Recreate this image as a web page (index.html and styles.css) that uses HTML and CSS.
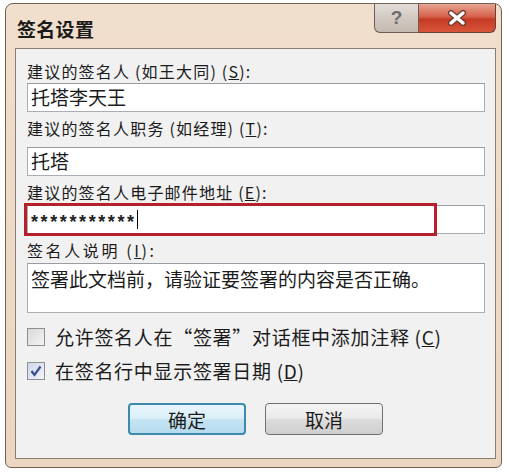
FILE: index.html
```html
<!DOCTYPE html>
<html lang="zh-CN">
<head>
<meta charset="UTF-8">
<meta name="viewport" content="width=device-width, initial-scale=1.0">
<title>签名设置</title>
<link rel="stylesheet" href="styles.css">
</head>
<body>

<div class="window">
    <div class="titlebar">
        <span class="title">签名设置</span>
        <div class="title-buttons">
            <span class="btn-help">?</span>
            <span class="btn-close">
                <svg width="22" height="16" viewBox="0 0 22 16">
                    <path d="M5 3 L17 13 M17 3 L5 13" stroke="#6e3a30" stroke-width="6" stroke-linecap="round"/>
                    <path d="M5 3 L17 13 M17 3 L5 13" stroke="#ffffff" stroke-width="3.5" stroke-linecap="round"/>
                </svg>
            </span>
        </div>
    </div>

    <div class="client">
        <div class="label label-first">建议的签名人 (如王大同) (<u>S</u>):</div>
        <div class="field field-first">托塔李天王</div>

        <div class="label label-next">建议的签名人职务 (如经理) (<u>T</u>):</div>
        <div class="field">托塔</div>

        <div class="label label-next">建议的签名人电子邮件地址 (<u>E</u>):</div>
        <div class="field-wrap">
            <div class="field field-mail"><span class="stars">***********</span><span class="caret"></span></div>
            <div class="highlight"></div>
        </div>

        <div class="label label-next label-short">签名人说明 (<u>I</u>):</div>
        <div class="field field-note">签署此文档前，请验证要签署的内容是否正确。</div>

        <div class="check-row check-first">
            <span class="checkbox"></span>
            <span class="check-text">允许签名人在“签署”对话框中添加注释 (<u>C</u>)</span>
        </div>
        <div class="check-row">
            <span class="checkbox checked">
                <svg width="12" height="12" viewBox="0 0 12 12">
                    <path d="M1.5 6 L4.5 10 L10.5 1.5" stroke="#3b4f8c" stroke-width="2.2" fill="none"/>
                </svg>
            </span>
            <span class="check-text">在签名行中显示签署日期 (<u>D</u>)</span>
        </div>

        <div class="button-row">
            <button class="dlg-button default">确定</button>
            <button class="dlg-button">取消</button>
        </div>
    </div>
</div>

</body>
</html>
```

FILE: styles.css
```css
body {
    margin: 0;
    padding: 0;
    background-color: #ffffff;
    font-family: "Noto Sans CJK SC", "Noto Sans", sans-serif;
    color: #1b1b1b;
}

.window {
    width: 497px;
    height: 465px;
    margin: 3px 0 0 5px;
    border: 1px solid #6f6253;
    border-radius: 8px 8px 6px 6px;
    background: linear-gradient(180deg, #f1dfcd 0%, #eedac6 40%, #ecd6c1 100%);
    box-sizing: border-box;
    display: flex;
    flex-direction: column;
}

.titlebar {
    height: 44px;
    display: flex;
    justify-content: space-between;
    align-items: flex-start;
    padding-left: 11px;
}

.title {
    margin-top: 14px;
    font-size: 19px;
    font-weight: bold;
    line-height: 22px;
    color: #1a1a1a;
    letter-spacing: 0.3px;
}

.title-buttons {
    display: flex;
    margin-right: 5px;
}

.btn-help {
    width: 45px;
    height: 29px;
    box-sizing: border-box;
    border: 1px solid #6a5e55;
    border-top: none;
    border-radius: 0 0 0 6px;
    background: linear-gradient(180deg, #e4ddd8 0%, #d1c8c1 50%, #c3b9b1 100%);
    text-align: center;
    font-family: "Liberation Sans", sans-serif;
    font-weight: bold;
    font-size: 19px;
    line-height: 27px;
    color: #6c6c6c;
}

.btn-close {
    width: 77px;
    height: 29px;
    box-sizing: border-box;
    border: 1px solid #6a4038;
    border-left: none;
    border-top: none;
    border-radius: 0 0 6px 0;
    background: linear-gradient(180deg, #e8a493 0%, #d5614a 45%, #c43b24 55%, #d8553a 100%);
    display: flex;
    justify-content: center;
    align-items: center;
}

.client {
    margin: 0 5px 0 9px;
    height: 411px;
    box-sizing: border-box;
    border: 1px solid #8a7e72;
    background-color: #f1f1f1;
    padding: 12px 10px 0 11px;
}

.label {
    height: 20px;
    line-height: 20px;
    font-size: 16px;
    letter-spacing: 1.2px;
    white-space: nowrap;
}

.label-short {
    letter-spacing: 2.6px;
}

.label-first {
    margin-top: 0;
}

.label-next {
    margin-top: 6px;
}

.field {
    height: 29px;
    box-sizing: border-box;
    border: 1px solid #abadb3;
    border-top-color: #9a9ca3;
    background-color: #ffffff;
    margin-top: 9px;
    padding-left: 3px;
    font-size: 19px;
    line-height: 26px;
    white-space: nowrap;
}

.field-first {
    margin-top: 2px;
}

.field-wrap {
    position: relative;
    margin-top: 3px;
}

.field-mail {
    margin-top: 0;
    display: flex;
    align-items: center;
}

.stars {
    font-family: "Liberation Sans", sans-serif;
    font-size: 18px;
    font-weight: bold;
    letter-spacing: 2.6px;
    line-height: 26px;
    padding-top: 5px;
    color: #222222;
}

.caret {
    width: 1px;
    height: 19px;
    background-color: #000000;
}

.highlight {
    position: absolute;
    left: -3px;
    top: -2px;
    width: 413px;
    height: 33px;
    box-sizing: border-box;
    border: 3px solid #b5202c;
}

.field-note {
    height: 50px;
    margin-top: 3px;
    line-height: 30px;
}

.check-row {
    display: flex;
    align-items: center;
    height: 20px;
    margin-top: 14px;
}

.check-first {
    margin-top: 14px;
}

.checkbox {
    width: 18px;
    height: 18px;
    box-sizing: border-box;
    border: 1px solid #8e8f8f;
    background: linear-gradient(135deg, #d8d8d8 0%, #f4f4f4 100%);
    display: flex;
    justify-content: center;
    align-items: center;
    margin-right: 10px;
}

.checked {
    background: linear-gradient(135deg, #cfd6ea 0%, #f3f4fb 100%);
}

.check-text {
    font-size: 19px;
    line-height: 20px;
    letter-spacing: 0.7px;
    white-space: nowrap;
}

.button-row {
    display: flex;
    margin-top: 22px;
    padding-left: 101px;
    gap: 19px;
}

.dlg-button {
    width: 118px;
    height: 32px;
    border: 1px solid #707070;
    border-radius: 4px;
    background: linear-gradient(180deg, #f4f4f4 0%, #e9e9e9 48%, #dcdcdc 52%, #cfcfcf 100%);
    font-family: "Noto Sans CJK SC", sans-serif;
    font-size: 19px;
    color: #1b1b1b;
    padding: 0;
    cursor: pointer;
}

.dlg-button.default {
    border: 2px solid #3c8bad;
    background: linear-gradient(180deg, #eaf6fb 0%, #d9eef8 48%, #c5e4f3 52%, #b6dbee 100%);
}
```
